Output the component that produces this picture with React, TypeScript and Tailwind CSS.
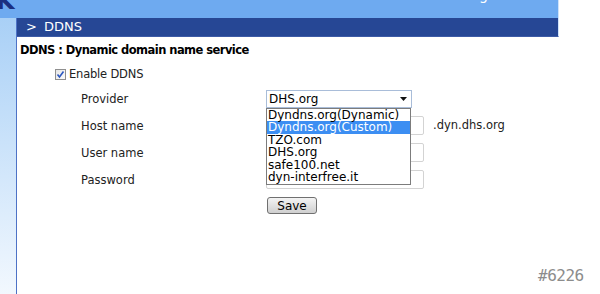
import React from "react";

const sans = { fontFamily: '"DejaVu Sans", Verdana, sans-serif' };

function Row({ label, children }: { label: string; children: React.ReactNode }) {
  return (
    <div className="flex h-[27px] items-center">
      <div className="w-[249px] pl-[64px] pt-[2px] text-[11.5px] text-[#222]">{label}</div>
      {children}
    </div>
  );
}

function TextBox() {
  return <div className="h-[19px] w-[158px] rounded-[2px] border border-[#d3d3d3] bg-white" />;
}

export default function App() {
  const items = [
    "Dyndns.org(Dynamic)",
    "Dyndns.org(Custom)",
    "TZO.com",
    "DHS.org",
    "safe100.net",
    "dyn-interfree.it",
  ];
  return (
    <div className="relative h-[294px] w-[600px] overflow-hidden bg-white" style={sans}>
      {/* top bar */}
      <div className="relative h-[18px] w-[559px] bg-[#6eaaf0] border-r border-[#cfe3fb]">
        <span className="absolute left-[-4px] top-[-11px] text-[24px] font-bold leading-none text-[#1b2f80]">K</span>
        <span className="absolute left-[479px] top-[-12px] text-[14px] leading-none text-white">g</span>
      </div>
      <div className="flex h-[276px]">
        {/* left strip */}
        <div className="h-full w-[16px] bg-gradient-to-b from-[#a9d0f6] to-[#f2f8fe]" />
        <div className="h-full w-[1px] bg-[#4d72c6]" />
        {/* main */}
        <div className="w-[542px]">
          <div className="flex h-[19px] items-center border-b border-[#3d5ba6] bg-[#264795] pl-[9px] text-[13px] text-white border-r border-r-[#cfe3fb]">
            <span className="mr-[7px]">&gt;</span>
            <span>DDNS</span>
          </div>
          <div className="flex h-[26px] items-center pl-[3px] pt-[1px] text-[11.5px] font-bold tracking-[-0.55px] text-black">
            DDNS : Dynamic domain name service
          </div>
          <div className="flex h-[22px] items-center pl-[38px] pt-[1px]">
            <div className="mr-[3px] flex h-[11px] w-[11px] items-center justify-center border border-[#8f8f8f] bg-gradient-to-br from-[#e6e6e6] to-[#fafafa]">
              <svg width="9" height="9" viewBox="0 0 9 9">
                <path d="M1.5 4.5 L3.5 7 L7.5 1.5" fill="none" stroke="#2b57c0" strokeWidth="1.6" />
              </svg>
            </div>
            <span className="text-[11.5px] tracking-[-0.2px] text-[#222]">Enable DDNS</span>
          </div>
          <Row label="Provider">
            <div className="relative">
              <div className="flex h-[18px] w-[146px] items-center justify-between border border-[#a9bdd9] bg-white pl-[2px] pr-[4px] text-[12px] text-black">
                <span>DHS.org</span>
                <svg width="7" height="4" viewBox="0 0 7 4">
                  <path d="M0 0 L7 0 L3.5 4 Z" fill="#111" />
                </svg>
              </div>
              <div className="absolute left-0 top-[18px] z-10 w-[145px] border border-[#7c7c7c] bg-white">
                {items.map((it, i) => (
                  <div
                    key={it}
                    className={
                      i === 1
                        ? "h-[12.6px] bg-[#3c8ef2] pl-[1px] text-[12px] leading-[12.6px] text-white"
                        : "h-[12.6px] pl-[1px] text-[12px] leading-[12.6px] text-black"
                    }
                  >
                    {it}
                  </div>
                ))}
              </div>
            </div>
          </Row>
          <Row label="Host name">
            <TextBox />
            <span className="ml-[9px] pt-[1px] text-[11.5px] text-[#222]">.dyn.dhs.org</span>
          </Row>
          <Row label="User name">
            <TextBox />
          </Row>
          <Row label="Password">
            <TextBox />
          </Row>
          <div className="mt-[4px] pl-[250px]">
            <button className="flex h-[17px] w-[50px] items-center justify-center rounded-[3px] border border-[#707070] bg-gradient-to-b from-[#f4f4f4] to-[#cfcfcf] text-[12px] text-black">
              Save
            </button>
          </div>
        </div>
      </div>
      <div className="absolute left-[538px] top-[264px] text-[16px] tracking-[-0.5px] text-[#8c8c8c]" style={{ fontFamily: '"DejaVu Sans Mono", monospace' }}>
        #6226
      </div>
    </div>
  );
}
